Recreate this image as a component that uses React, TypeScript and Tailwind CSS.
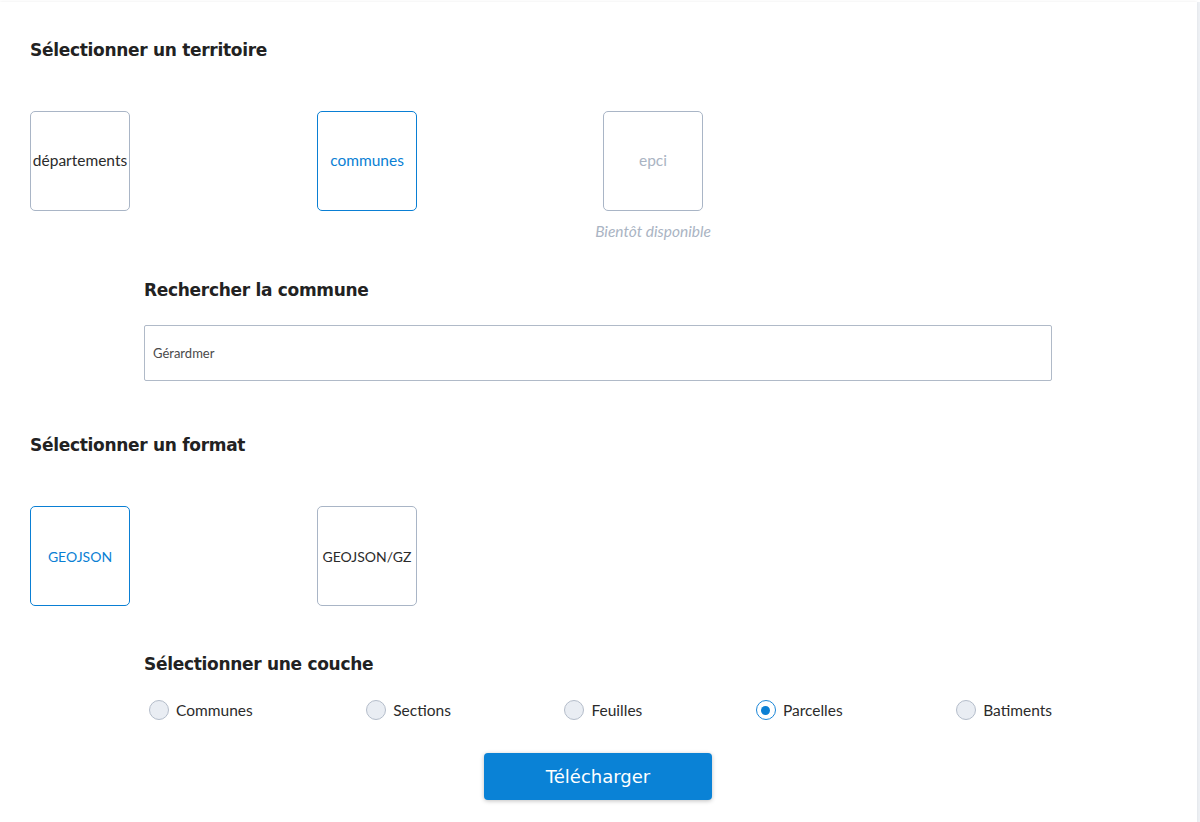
import React from 'react';

const heading = "font-['DejaVu_Sans',sans-serif] font-bold text-[17px] leading-[24px] text-[#222222] tracking-[-0.3px]";
const body = "font-['Lato',sans-serif]";

interface ChoiceProps {
  label: string;
  active?: boolean;
  disabled?: boolean;
  caps?: boolean;
}

function Choice({ label, active, disabled, caps }: ChoiceProps) {
  const border = active ? 'border-[#0a7fd4]' : 'border-[#a9b5c6]';
  const color = active ? 'text-[#0a7fd4]' : disabled ? 'text-[#aab4c3]' : 'text-[#2b2b2b]';
  return (
    <div className={`w-[100px] h-[100px] rounded-[5px] border ${border} bg-white flex items-center justify-center`}>
      <span className={`${body} ${caps ? 'text-[14px]' : 'text-[15.5px]'} ${color} whitespace-nowrap`}>{label}</span>
    </div>
  );
}

function Radio({ label, checked }: { label: string; checked?: boolean }) {
  return (
    <label className="flex items-center gap-[7px]">
      {checked ? (
        <span className="w-[20px] h-[20px] rounded-full border-[1.5px] border-[#1a86d8] bg-white flex items-center justify-center">
          <span className="w-[9px] h-[9px] rounded-full bg-[#0a7fd4]" />
        </span>
      ) : (
        <span className="w-[20px] h-[20px] rounded-full border border-[#b4bdca] bg-[#e9edf3]" />
      )}
      <span className={`${body} text-[15.5px] leading-[20px] text-[#2b2b2b]`}>{label}</span>
    </label>
  );
}

export default function App() {
  const layers = ['Communes', 'Sections', 'Feuilles', 'Parcelles', 'Batiments'];

  return (
    <div className="min-h-screen bg-[#eef1f5]">
      <div className="w-[1197px] min-h-[820px] mt-[2px] bg-white px-[30px] pt-[36px] pb-[20px] shadow-[0_0_3px_rgba(0,0,0,0.08)]">
        <h2 className={heading}>Sélectionner un territoire</h2>

        <div className="mt-[49px] flex items-start">
          <div className="w-[287px]">
            <Choice label="départements" />
          </div>
          <div className="w-[286px]">
            <Choice label="communes" active />
          </div>
          <div className="w-[100px] flex flex-col items-center">
            <Choice label="epci" disabled />
            <span className={`${body} mt-[10px] text-[15.5px] leading-[20px] italic text-[#aab4c3] whitespace-nowrap`}>
              Bientôt disponible
            </span>
          </div>
        </div>

        <div className="ml-[114px] w-[908px]">
          <h2 className={`${heading} mt-[37px]`}>Rechercher la commune</h2>
          <input
            readOnly
            value="Gérardmer"
            className={`${body} mt-[23px] block w-full h-[56px] px-[8px] border border-[#b0bac8] rounded-[2px] text-[13px] text-[#4a4a4a] outline-none`}
          />
        </div>

        <h2 className={`${heading} mt-[52px]`}>Sélectionner un format</h2>

        <div className="mt-[49px] flex items-start">
          <div className="w-[287px]">
            <Choice label="GEOJSON" active caps />
          </div>
          <div className="w-[286px]">
            <Choice label="GEOJSON/GZ" caps />
          </div>
        </div>

        <div className="ml-[114px] w-[908px]">
          <h2 className={`${heading} mt-[46px]`}>Sélectionner une couche</h2>
          <div className="mt-[24px] pl-[5px] flex items-center justify-between">
            {layers.map((l) => (
              <Radio key={l} label={l} checked={l === 'Parcelles'} />
            ))}
          </div>
          <div className="mt-[33px] flex justify-center">
            <button className="w-[228px] h-[47px] rounded-[4px] bg-[#0a82d6] text-white font-['DejaVu_Sans',sans-serif] font-normal text-[18px] shadow-[0_1px_4px_rgba(0,0,0,0.25)]">
              Télécharger
            </button>
          </div>
        </div>
      </div>
    </div>
  );
}
